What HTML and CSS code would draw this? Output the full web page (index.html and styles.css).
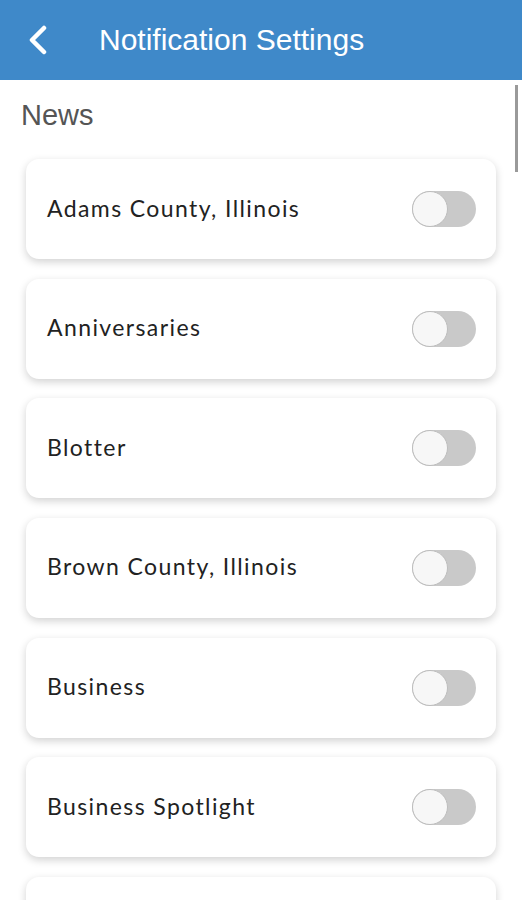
FILE: index.html
```html
<!DOCTYPE html>
<html lang="en">
<head>
  <meta charset="UTF-8" />
  <title>Notification Settings</title>
  <link rel="stylesheet" href="styles.css">
</head>
<body>
  <div class="header">
    <svg class="back" width="22" height="30" viewBox="0 0 22 30">
      <path d="M17 3 L5 15 L17 27" fill="none" stroke="#fff" stroke-width="4.5" stroke-linecap="round" stroke-linejoin="round" />
    </svg>
    <h1>Notification Settings</h1>
  </div>

  <div class="content">
    <div class="scrollbar"></div>
    <h2>News</h2>
    <div class="list">
      <div class="card"><span>Adams County, Illinois</span><div class="toggle"><div class="knob"></div></div></div>
      <div class="card"><span>Anniversaries</span><div class="toggle"><div class="knob"></div></div></div>
      <div class="card"><span>Blotter</span><div class="toggle"><div class="knob"></div></div></div>
      <div class="card"><span>Brown County, Illinois</span><div class="toggle"><div class="knob"></div></div></div>
      <div class="card"><span>Business</span><div class="toggle"><div class="knob"></div></div></div>
      <div class="card"><span>Business Spotlight</span><div class="toggle"><div class="knob"></div></div></div>
      <div class="card"></div>
    </div>
  </div>
</body>
</html>
```

FILE: styles.css
```css
body {
  margin: 0;
  padding: 0;
  background-color: #fff;
  font-family: 'Liberation Sans', sans-serif;
  height: 900px;
  overflow: hidden;
}

.header {
  height: 80px;
  background-color: #3f89c9;
  display: flex;
  align-items: center;
  padding-left: 27px;
}

.back {
  margin-right: 50px;
}

h1 {
  margin: 0;
  font-size: 30px;
  font-weight: normal;
  color: #fff;
  padding-bottom: 1px;
}

.content {
  position: relative;
  padding: 17px 26px 0 26px;
}

.scrollbar {
  position: absolute;
  right: 4px;
  top: 5px;
  width: 3px;
  height: 87px;
  background: #9a9a9a;
}

h2 {
  margin: 0 0 25px -5px;
  font-size: 29px;
  font-weight: normal;
  color: #555;
  line-height: 37px;
}

.list {
  display: flex;
  flex-direction: column;
  gap: 19.67px;
}

.card {
  height: 100px;
  flex-shrink: 0;
  box-sizing: border-box;
  width: 470px;
  background: #fff;
  border-radius: 13px;
  box-shadow: 0 3px 8px rgba(0,0,0,0.18);
  display: flex;
  align-items: center;
  justify-content: space-between;
  padding: 0 20px 0 21px;
  font-family: 'Lato', sans-serif;
  font-size: 23px;
  letter-spacing: 1.4px;
  color: #222;
}

.card span {
  padding-bottom: 3px;
}

.toggle {
  width: 64px;
  height: 36px;
  border-radius: 18px;
  background: #c9c9c9;
  position: relative;
}

.knob {
  position: absolute;
  left: 0;
  top: 0;
  width: 34px;
  height: 34px;
  border-radius: 50%;
  background: #f7f7f7;
  border: 1px solid #bdbdbd;
}
```
